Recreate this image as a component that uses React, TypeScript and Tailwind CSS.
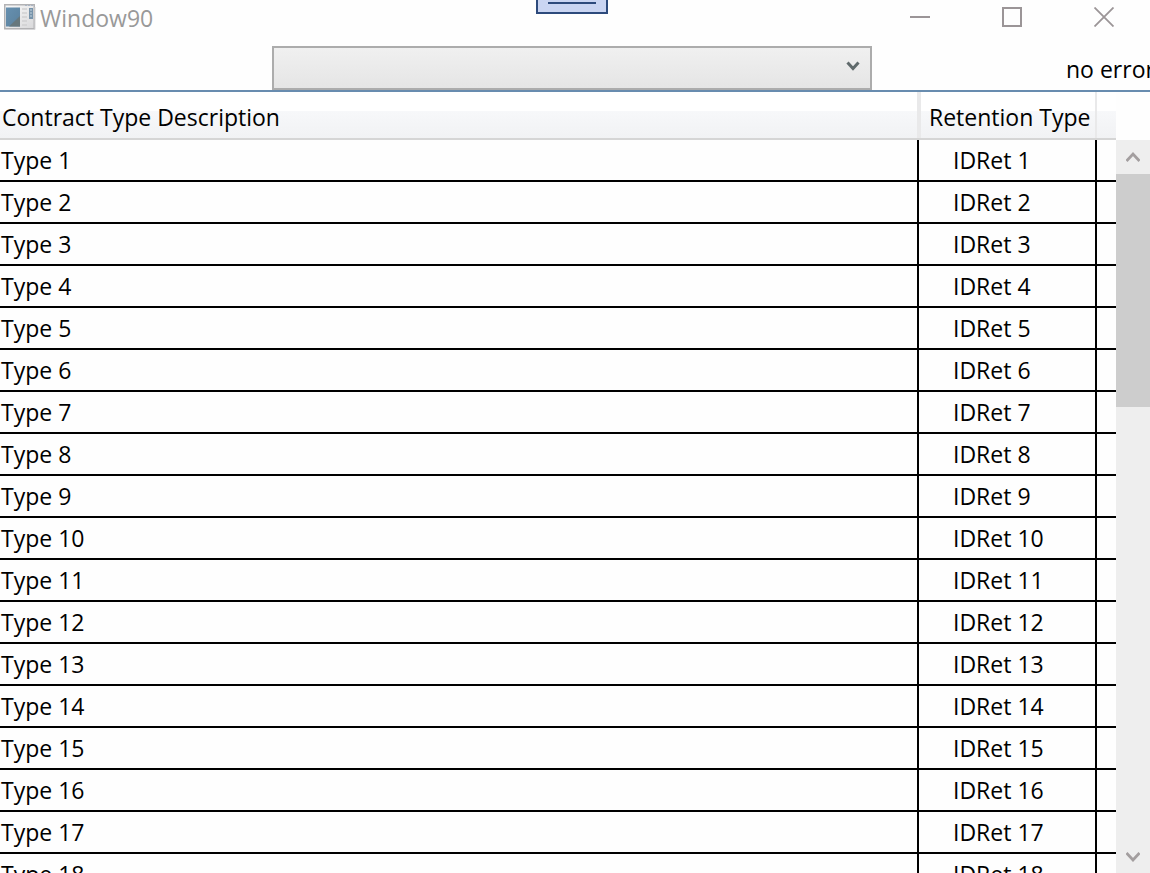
import React from "react";

const rows = Array.from({ length: 40 }, (_, i) => i + 1);

function AppIcon() {
  return (
    <svg width="32" height="27" viewBox="0 0 32 27" aria-hidden="true">
      <defs>
        <linearGradient id="frame" x1="0" y1="0" x2="1" y2="1">
          <stop offset="0" stopColor="#fafafa" />
          <stop offset="1" stopColor="#d8d8da" />
        </linearGradient>
        <linearGradient id="pane" x1="0" y1="0" x2="1" y2="1">
          <stop offset="0" stopColor="#6690b0" />
          <stop offset="1" stopColor="#5b819d" />
        </linearGradient>
      </defs>
      <rect x="0.75" y="0.75" width="29.5" height="24" fill="url(#frame)" stroke="#b2b2b4" strokeWidth="1.5" />
      <path d="M2 25.500h29V3" fill="none" stroke="#d4d4d6" />
      <rect x="2" y="3.5" width="14" height="19" fill="url(#pane)" />
      <path d="M16 12v10.500H5z" fill="#66777d" />
      <path d="M18 5h5M18 9h5M18 13h5M18 17h5M18 21h5" stroke="#cfcfd1" strokeWidth="1.5" />
      <rect x="25" y="4" width="4" height="11" fill="#7793aa" />
      <path d="M26 6h2M26 9h2M26 12h2" stroke="#c3d3df" />
      <path d="M21 1.500h8" stroke="#a9b4c4" strokeDasharray="2 1" />
    </svg>
  );
}

function TitleBar() {
  const button = "flex h-[34px] w-[92px] items-center justify-center text-[#9b9597]";
  return (
    <header className="flex h-[46px] shrink-0 items-start">
      <div className="flex h-[34px] flex-1 items-center gap-1 pl-1">
        <AppIcon />
        <h1 className="pt-0.5 leading-[30px] text-[#999]">Window90</h1>
      </div>
      <button type="button" aria-label="Minimize" className={button}>
        <svg width="20" height="20" viewBox="0 0 20 20"><path d="M0 10h20" stroke="currentColor" strokeWidth="2" /></svg>
      </button>
      <button type="button" aria-label="Maximize" className={button}>
        <svg width="20" height="20" viewBox="0 0 20 20"><path d="M1 1h18v18H1z" fill="none" stroke="currentColor" strokeWidth="2" /></svg>
      </button>
      <button type="button" aria-label="Close" className={button}>
        <svg width="20" height="20" viewBox="0 0 20 20"><path d="M.5.5l19 19M19.500.5l-19 19" stroke="currentColor" strokeWidth="1.8" /></svg>
      </button>
    </header>
  );
}

function Toolbar() {
  return (
    <div className="grid shrink-0 grid-cols-[minmax(0,1fr)_600px_minmax(0,1fr)] pr-1.5">
      <div />
      <div className="relative">
        <select
          aria-label="Contract type"
          className="block h-11 w-full appearance-none border-2 border-[#acacac] bg-linear-to-b from-[#f0f0f0] to-[#e5e5e5] px-3"
        >
          <option></option>
        </select>
        <svg className="pointer-events-none absolute top-[15px] right-3 text-[#606a6c]" width="14" height="11" viewBox="0 0 14 11" aria-hidden="true">
          <path d="M1.500 1.500L7 7.500l5.500-6" fill="none" stroke="currentColor" strokeWidth="3" />
        </svg>
      </div>
      <p className="pt-2 pl-[194px] leading-[30px] whitespace-nowrap">no error</p>
    </div>
  );
}

function DataGrid() {
  const head = "h-12 border-b-2 border-[#d5d5d5] bg-[linear-gradient(to_bottom,#ffffff_0,#ffffff_19px,#f7f8fa_19px,#f1f2f4_100%)] p-0 text-left font-normal whitespace-nowrap";
  const headLabel = "flex h-[46px] items-center border-[#e9e9ea] pt-1";
  const cell = "h-[42px] border-b-2 border-black p-0 leading-10";
  return (
    <div className="min-w-0 flex-1 overflow-hidden">
      <table className="w-full table-fixed border-separate border-spacing-0">
        <colgroup>
          <col />
          <col className="w-[178px]" />
          <col className="w-[19px]" />
        </colgroup>
        <thead>
          <tr>
            <th scope="col" className={head}>
              <span className={headLabel + " border-r-2 pl-0.5"}>Contract Type Description</span>
            </th>
            <th scope="col" className={head}>
              <span className={headLabel + " border-x-2 pl-2"}>Retention Type</span>
            </th>
            <td className={head}></td>
          </tr>
        </thead>
        <tbody>
          {rows.map((n) => (
            <tr key={n}>
              <td className={cell + " border-r-2 pl-px"}>Type {n}</td>
              <td className={cell + " border-r-2 pl-[34px]"}>IDRet {n}</td>
              <td className={cell}></td>
            </tr>
          ))}
        </tbody>
      </table>
    </div>
  );
}

function ScrollBar() {
  const arrow = "flex h-[34px] w-full shrink-0 items-center justify-center text-[#a39e9f]";
  return (
    <div className="flex w-[34px] shrink-0 flex-col pt-12">
      <div className="flex min-h-0 flex-1 flex-col bg-[#eee]">
        <button type="button" aria-label="Scroll up" className={arrow}>
          <svg width="14" height="12" viewBox="0 0 14 12"><path d="M.5 10L7 3l6.500 7" fill="none" stroke="currentColor" strokeWidth="2.8" /></svg>
        </button>
        <div className="min-h-0 flex-1">
          <div className="h-[35%] bg-[#cdcdcd]" />
        </div>
        <button type="button" aria-label="Scroll down" className={arrow}>
          <svg width="14" height="12" viewBox="0 0 14 12"><path d="M.5 3L7 10l6.500-7" fill="none" stroke="currentColor" strokeWidth="2.8" /></svg>
        </button>
      </div>
    </div>
  );
}

export default function App() {
  return (
    <main className="relative flex h-screen flex-col overflow-hidden bg-[#fefefe] font-['Open_Sans','Noto_Sans',sans-serif] text-[23px] text-black">
      <TitleBar />
      <div className="absolute top-0 left-[536px] h-3.5 w-[72px] border-2 border-t-0 border-[#2d4a7c] bg-[#cad5f2] px-2.5 pt-0.5">
        <div className="h-0.5 bg-[#2d4a7c]" />
      </div>
      <Toolbar />
      <section className="flex min-h-0 flex-1 border-t-2 border-[#688caf]">
        <DataGrid />
        <ScrollBar />
      </section>
    </main>
  );
}
